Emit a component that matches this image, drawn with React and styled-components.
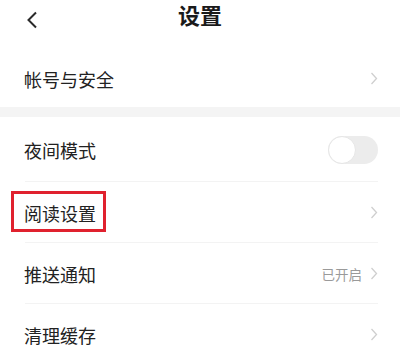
import React from "react";
import styled, { createGlobalStyle } from "styled-components";

const GlobalStyle = createGlobalStyle`
  html, body {
    margin: 0;
    padding: 0;
    background: #ffffff;
  }
  body {
    font-family: "Noto Sans CJK SC", "Noto Sans", sans-serif;
    color: #222222;
  }
`;

const Page = styled.div`
  width: 400px;
  height: 347px;
  overflow: hidden;
  background: #ffffff;
`;

const Header = styled.div`
  position: relative;
  height: 50px;
  display: flex;
  justify-content: center;
  align-items: flex-start;
`;

const BackButton = styled.button`
  position: absolute;
  left: 22px;
  top: 10px;
  width: 20px;
  height: 20px;
  padding: 0;
  border: none;
  background: none;
  display: flex;
  align-items: center;
  justify-content: center;
`;

const Title = styled.h1`
  margin: 3px 0 0;
  font-size: 22px;
  font-weight: 700;
  line-height: 22px;
  color: #1a1a1a;
`;

const Band = styled.div`
  height: 10px;
  background: #f4f4f4;
`;

const RowWrap = styled.div`
  position: relative;
  &::after {
    content: "";
    display: ${(p) => (p.$last ? "none" : "block")};
    position: absolute;
    left: 25px;
    right: 22px;
    bottom: 0;
    height: 1px;
    background: #f3f3f3;
  }
`;

const Row = styled.div`
  height: ${(p) => p.$height || 61}px;
  display: flex;
  align-items: center;
  justify-content: space-between;
  padding: 0 22px 0 24px;
`;

const Label = styled.span`
  position: relative;
  font-size: 18px;
  line-height: 18px;
  color: #222222;

  ${(p) =>
    p.$marked &&
    `
    &::after {
      content: "";
      position: absolute;
      left: -13px;
      right: -10px;
      top: -13px;
      bottom: -10px;
      border: 3px solid #e0212e;
    }
  `}
`;

const Trail = styled.div`
  display: flex;
  align-items: center;
  gap: 8px;
`;

const Status = styled.span`
  font-size: 13.5px;
  color: #9a9a9a;
`;

const Toggle = styled.div`
  width: 50px;
  height: 28px;
  border-radius: 14px;
  background: #ececec;
  position: relative;
  &::before {
    content: "";
    position: absolute;
    left: 0;
    top: 0;
    width: 26px;
    height: 26px;
    border-radius: 50%;
    background: #ffffff;
    border: 1px solid #e6e6e6;
  }
`;

const Chevron = () => (
  <svg width="8" height="13" viewBox="0 0 8 13" fill="none">
    <path d="M1.5 1 L6.5 6.5 L1.5 12" stroke="#cfcfcf" strokeWidth="1.3" />
  </svg>
);

const rows = [
  { label: "夜间模式", toggle: true, height: 65 },
  { label: "阅读设置", marked: true },
  { label: "推送通知", status: "已开启" },
  { label: "清理缓存", last: true },
];

export default function App() {
  return (
    <Page>
      <GlobalStyle />
      <Header>
        <BackButton aria-label="返回">
          <svg width="14" height="18" viewBox="0 0 14 18" fill="none">
            <path d="M11 1.5 L3.5 9 L11 16.5" stroke="#2a2a2a" strokeWidth="2" />
          </svg>
        </BackButton>
        <Title>设置</Title>
      </Header>

      <RowWrap $last>
        <Row $height={57}>
          <Label>帐号与安全</Label>
          <Chevron />
        </Row>
      </RowWrap>

      <Band />

      {rows.map((r) => (
        <RowWrap key={r.label} $last={r.last}>
          <Row $height={r.height}>
            <Label $marked={r.marked}>{r.label}</Label>
            {r.toggle ? (
              <Toggle />
            ) : (
              <Trail>
                {r.status && <Status>{r.status}</Status>}
                <Chevron />
              </Trail>
            )}
          </Row>
        </RowWrap>
      ))}
    </Page>
  );
}
